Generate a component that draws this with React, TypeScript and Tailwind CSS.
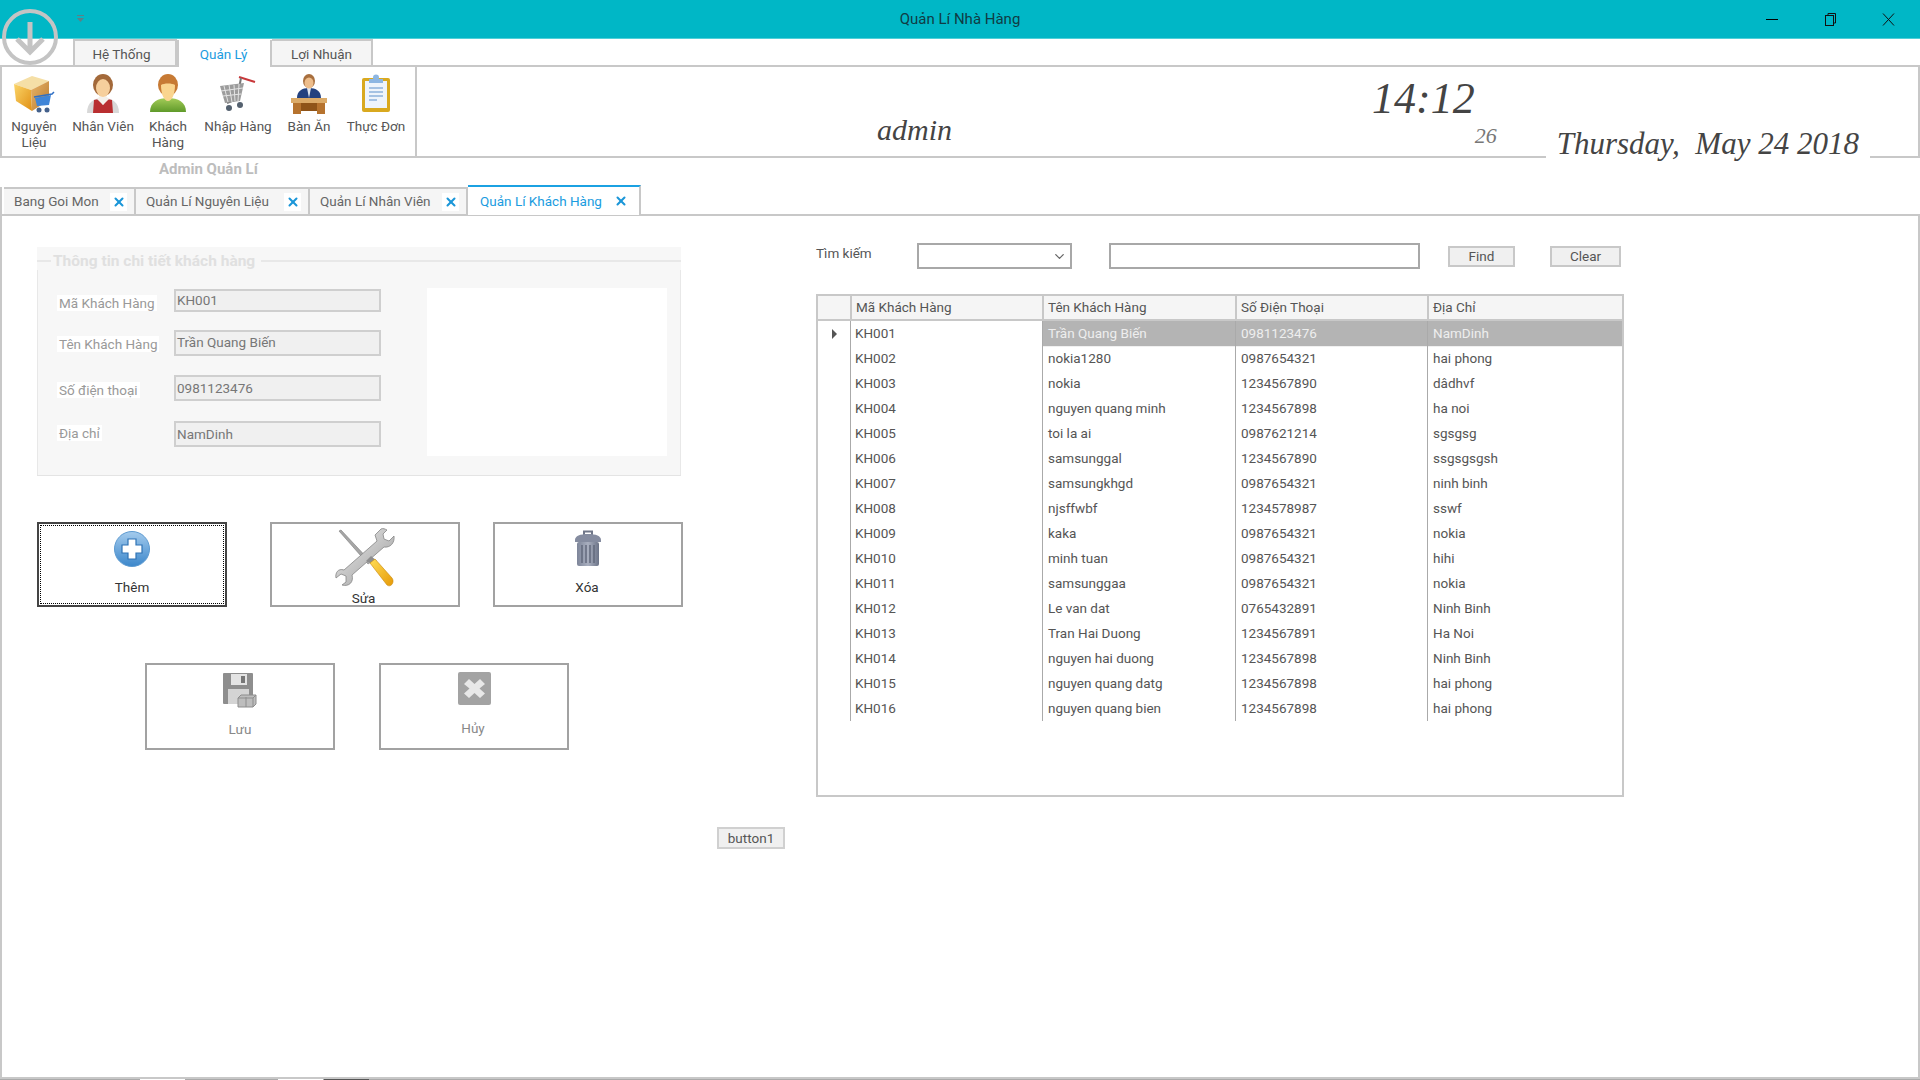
import { X, ChevronDown } from 'lucide-react';
import type { ReactNode } from 'react';

const customers = [
    ['KH001', 'Trần Quang Biến', '0981123476', 'NamDinh'],
    ['KH002', 'nokia1280', '0987654321', 'hai phong'],
    ['KH003', 'nokia', '1234567890', 'dâdhvf'],
    ['KH004', 'nguyen quang minh', '1234567898', 'ha noi'],
    ['KH005', 'toi la ai', '0987621214', 'sgsgsg'],
    ['KH006', 'samsunggal', '1234567890', 'ssgsgsgsh'],
    ['KH007', 'samsungkhgd', '0987654321', 'ninh binh'],
    ['KH008', 'njsffwbf', '1234578987', 'sswf'],
    ['KH009', 'kaka', '0987654321', 'nokia'],
    ['KH010', 'minh tuan', '0987654321', 'hihi'],
    ['KH011', 'samsunggaa', '0987654321', 'nokia'],
    ['KH012', 'Le van dat', '0765432891', 'Ninh Binh'],
    ['KH013', 'Tran Hai Duong', '1234567891', 'Ha Noi'],
    ['KH014', 'nguyen hai duong', '1234567898', 'Ninh Binh'],
    ['KH015', 'nguyen quang datg', '1234567898', 'hai phong'],
    ['KH016', 'nguyen quang bien', '1234567898', 'hai phong'],
];

const BoxIcon = () => (
    <svg width="42" height="40" viewBox="0 0 42 40">
        <defs>
            <linearGradient id="boxL" x1="0" y1="0" x2="1" y2="1"><stop offset="0" stopColor="#fbd568" /><stop offset="1" stopColor="#e08f14" /></linearGradient>
            <linearGradient id="boxR" x1="0" y1="0" x2="1" y2="1"><stop offset="0" stopColor="#e9b568" /><stop offset="1" stopColor="#b97a30" /></linearGradient>
        </defs>
        <polygon points="1,10 19,2 36,7 18,16" fill="#f5dfa6" />
        <polygon points="1,10 18,16 19,37 3,27" fill="url(#boxL)" />
        <polygon points="18,16 36,7 36,26 19,37" fill="url(#boxR)" />
        <path d="M21 23 L39 20 L41 18" fill="none" stroke="#2f6fc4" strokeWidth="1.5" />
        <polygon points="22,24 38,21 36,31 24,32" fill="#3f85d8" />
        <circle cx="26" cy="36" r="2.5" fill="#44618c" />
        <circle cx="34" cy="36" r="2.5" fill="#44618c" />
    </svg>
);

const VestIcon = () => (
    <svg width="34" height="40" viewBox="0 0 34 40">
        <path d="M1 39 C1 28 8 24 17 24 C26 24 33 28 33 39 Z" fill="#d8d8d8" />
        <path d="M7 39 L8 26 L13 25 L17 31 L21 25 L26 26 L27 39 Z" fill="#b92e30" />
        <path d="M11 25 L17 31 L23 25 L20 22 H14 Z" fill="#f4f0ea" />
        <ellipse cx="17" cy="11" rx="10" ry="11" fill="#a3693a" />
        <ellipse cx="17" cy="14" rx="7" ry="9" fill="#f6cf9c" />
    </svg>
);

const GreenIcon = () => (
    <svg width="36" height="39" viewBox="0 0 36 39">
        <defs>
            <linearGradient id="grn" x1="0" y1="0" x2="0" y2="1"><stop offset="0" stopColor="#a4cc58" /><stop offset="1" stopColor="#5f9a2a" /></linearGradient>
        </defs>
        <path d="M0 38 C0 28 8 24 18 24 C28 24 36 28 36 38 Z" fill="url(#grn)" />
        <ellipse cx="18" cy="11" rx="10" ry="11" fill="#c77a34" />
        <path d="M11 11 C14 9 22 9 25 11 C25 20 22 27 18 27 C14 27 11 20 11 11 Z" fill="#fad58f" />
    </svg>
);

const CartIcon = () => (
    <svg width="38" height="38" viewBox="0 0 38 38">
        <path d="M20 3 L36 8" stroke="#c8383a" strokeWidth="2" />
        <path d="M22 4 L18 25 L8 29" fill="none" stroke="#777" strokeWidth="2" />
        <polygon points="1,12 25,9 21,27 6,29" fill="#9c9c9c" />
        <path d="M5 12 L9 28 M10 11 L13 28 M15 11 L16 27 M20 10 L19 27 M2 17 L24 14 M4 22 L22 20" stroke="#e4e4e4" strokeWidth="1" />
        <circle cx="10" cy="34" r="3" fill="#54616f" />
        <circle cx="21" cy="31" r="3" fill="#54616f" />
    </svg>
);

const DeskIcon = () => (
    <svg width="36" height="40" viewBox="0 0 36 40">
        <path d="M6 24 C6 17 11 14 18 14 C25 14 30 17 30 24 Z" fill="#23417f" />
        <path d="M16 14 L18 24 L20 14 Z" fill="#dfe6f0" />
        <ellipse cx="18" cy="7" rx="6" ry="7" fill="#a86f3e" />
        <ellipse cx="18" cy="9" rx="4.5" ry="5.5" fill="#edbd8b" />
        <rect x="0" y="24" width="36" height="5" fill="#dcab68" />
        <rect x="2" y="29" width="8" height="11" fill="#b6732e" />
        <rect x="26" y="29" width="8" height="11" fill="#b6732e" />
        <rect x="10" y="29" width="16" height="8" fill="#8f5418" />
    </svg>
);

const ClipboardIcon = () => (
    <svg width="30" height="39" viewBox="0 0 30 39">
        <rect x="1" y="4" width="28" height="34" rx="2" fill="#d9a91f" />
        <rect x="4" y="7" width="22" height="27" fill="#eef4fb" />
        <path d="M8 5 H22 V9 H8 Z" fill="#8db6e2" />
        <circle cx="15" cy="3.5" r="3" fill="#8db6e2" />
        <path d="M8 14 H22 M8 18 H22 M8 22 H22 M8 26 H16" stroke="#8db1dc" strokeWidth="1.6" />
    </svg>
);

const PlusIcon = () => (
    <svg width="36" height="36" viewBox="0 0 36 36">
        <defs>
            <linearGradient id="plusBg" x1="0" y1="0" x2="0" y2="1"><stop offset="0" stopColor="#a4cbed" /><stop offset="1" stopColor="#3c87cb" /></linearGradient>
        </defs>
        <circle cx="18" cy="18" r="17.5" fill="url(#plusBg)" stroke="#5d9ad0" />
        <path d="M14 8 H22 V14 H28 V22 H22 V28 H14 V22 H8 V14 H14 Z" fill="#fff" stroke="#2f73b5" strokeWidth="1.2" />
    </svg>
);

const ToolsIcon = () => (
    <svg width="60" height="60" viewBox="0 0 60 60">
        <defs>
            <linearGradient id="steel" x1="0" y1="0" x2="1" y2="1"><stop offset="0" stopColor="#ededed" /><stop offset="1" stopColor="#9b9b9b" /></linearGradient>
            <linearGradient id="handle" x1="0" y1="0" x2="1" y2="1"><stop offset="0" stopColor="#ffdd55" /><stop offset="1" stopColor="#e69a08" /></linearGradient>
        </defs>
        <path d="M4 3 L6 2 L36 34 L33 36 Z" fill="#a6a6a6" stroke="#7c7c7c" strokeWidth="0.6" />
        <path d="M46 1 L40 7 L42 13 L9 42 C3 40 0 45 1 50 L6 46 L11 48 L11 54 L7 57 C14 59 19 54 17 47 L49 19 C55 20 60 15 59 8 L54 13 L49 11 L48 6 L52 2 C50 1 48 0 46 1 Z" fill="url(#steel)" stroke="#858585" strokeWidth="0.8" />
        <path d="M31 33 L36 28 L42 33 L40 37 Z" fill="#8d8d8d" />
        <path d="M35 35 L40 31 L57 50 C60 54 56 60 52 57 Z" fill="url(#handle)" stroke="#c88608" strokeWidth="0.6" />
    </svg>
);

const TrashIcon = () => (
    <svg width="28" height="37" viewBox="0 0 28 37">
        <defs>
            <linearGradient id="bin" x1="0" y1="0" x2="1" y2="0"><stop offset="0" stopColor="#7d8599" /><stop offset="0.5" stopColor="#a9afbf" /><stop offset="1" stopColor="#6c7488" /></linearGradient>
        </defs>
        <path d="M10 5 V1.5 H18 V5" fill="none" stroke="#707789" strokeWidth="2" />
        <path d="M1 10 C1 6 6 4 14 4 C22 4 27 6 27 10 V12 H1 Z" fill="#858ca0" />
        <rect x="3" y="12" width="22" height="24" rx="2" fill="url(#bin)" />
        <path d="M8 15 V33 M12 15 V33 M16 15 V33 M20 15 V33" stroke="#5f6679" strokeWidth="1.4" />
    </svg>
);

const FloppyIcon = () => (
    <svg width="34" height="35" viewBox="0 0 34 35">
        <rect x="0" y="0" width="30" height="31" rx="1" fill="#8e8e8e" />
        <rect x="8" y="1" width="16" height="11" fill="#e4e4e4" />
        <rect x="18" y="3" width="4" height="7" fill="#777" />
        <rect x="5" y="16" width="21" height="15" fill="#d4d4d4" />
        <path d="M15 25 L18 22 H33 V31 L30 34 H15 Z" fill="#bdbdbd" stroke="#8d8d8d" />
        <path d="M23 24 V34 M15 25 H30 V34 M30 25 L33 22" fill="none" stroke="#8d8d8d" />
    </svg>
);

const CancelIcon = () => (
    <svg width="33" height="33" viewBox="0 0 33 33">
        <rect x="0" y="0" width="33" height="33" rx="2" fill="#a3a3a3" />
        <path d="M11 7 L16.5 12 L22 7 L27 12 L21.5 16.5 L27 21.5 L22 26 L16.5 21 L11 26 L6 21.5 L11.5 16.5 L6 12 Z" fill="#e8e8e8" />
    </svg>
);

const RibbonButton = ({ icon, label, width }: { icon: ReactNode; label: ReactNode; width: string }) => (
    <div className={`${width} flex flex-col items-center pt-[7px] text-center text-[13.5px] leading-[16px] text-[#555]`}>
        <div className="h-[41px] flex items-start justify-center">{icon}</div>
        <div className="mt-[3px]">{label}</div>
    </div>
);

const DocTab = ({ label, width, active }: { label: string; width: string; active?: boolean }) => (
    <div className={active
        ? `${width} h-[30px] -mt-[2px] -mb-[1px] relative z-10 flex items-center justify-between pl-[12px] pr-[10px] bg-white border-t-2 border-t-[#1ba1e2] border-r-2 border-r-[#c8c8c8] text-[#1b9ce0]`
        : `${width} h-[27px] flex items-center justify-between pl-[10px] pr-[7px] bg-[#f5f5f5] border-t-2 border-r-2 border-[#c8c8c8] text-[#666]`}>
        <span>{label}</span>
        <span className="w-[17px] h-[18px] bg-white flex items-center justify-center">
            <X size={14} strokeWidth={3.5} className="text-[#1b96d8]" />
        </span>
    </div>
);

const FormRow = ({ label, value, rowClass, labelClass, inputClass }: { label: string; value: string; rowClass: string; labelClass: string; inputClass: string }) => (
    <div className={`flex ${rowClass}`}>
        <div className="w-[117px] shrink-0">
            <span className={`inline-block h-[16px] px-[2px] leading-[16px] bg-white text-[#999] ${labelClass}`}>{label}</span>
        </div>
        <div className={`w-[207px] bg-[#f0f0f0] border-2 border-[#cfcfcf] pl-[1px] text-[#777] ${inputClass}`}>{value}</div>
    </div>
);

const ActionButton = ({ icon, label, rowClass, labelClass, focused }: { icon: ReactNode; label: string; rowClass: string; labelClass: string; focused?: boolean }) => (
    <div className={focused
        ? `relative w-[190px] flex flex-col items-center border-2 border-[#444] ${rowClass}`
        : `w-[190px] flex flex-col items-center border-2 border-[#a2a2a2] ${rowClass}`}>
        {focused && <div className="absolute inset-[1px] border border-dotted border-black" />}
        <div className="shrink-0">{icon}</div>
        <span className={labelClass}>{label}</span>
    </div>
);

export default function App() {
    return (
        <div className="relative w-[1920px] h-[1080px] overflow-hidden bg-white flex flex-col font-['Roboto',sans-serif] text-[13.5px]">
            {/* title bar */}
            <div className="h-[39px] shrink-0 bg-[#00b7c6] border-b border-b-[#4fd0d8] flex items-center justify-center relative text-[15px] text-[#103c44]">
                <span className="mt-[1px]">Quản Lí Nhà Hàng</span>
                <div className="absolute right-0 top-0 h-[38px] flex items-center gap-[46px] pr-[25px]">
                    <div className="w-[12px] h-px bg-black" />
                    <svg width="12" height="13" viewBox="0 0 12 13" fill="none" stroke="#111"><rect x="1.5" y="2.5" width="8" height="10" /><path d="M4 2.5 V0.5 H11.5 V10 H9.5" /></svg>
                    <svg width="13" height="13" viewBox="0 0 13 13" stroke="#111"><path d="M1 0.5 L12 12.5 M12 0.5 L1 12.5" /></svg>
                </div>
            </div>
            <svg className="absolute left-[2px] top-[8px] z-20" width="56" height="58" viewBox="0 0 56 58" fill="none" stroke="#c4c4c4">
                <circle cx="28" cy="29" r="26" strokeWidth="4" />
                <path d="M28 14 V43 M15 31 L28 44 L41 31" strokeWidth="5" />
            </svg>
            <svg className="absolute left-[76px] top-[14px]" width="9" height="9" viewBox="0 0 9 9" fill="#5d7f86"><rect x="1" y="1" width="7" height="1" /><polygon points="1,4 8,4 4.5,8" /></svg>

            {/* ribbon tabs */}
            <div className="h-[26px] shrink-0 flex items-end pl-[73px] text-[#555]">
                <div className="w-[104px] h-[26px] pt-[2px] pr-[7px] flex items-center justify-center bg-[#f5f5f5] border-t-2 border-x-2 border-[#c8c8c8]">Hệ Thống</div>
                <div className="w-[95px] h-[27px] pt-[2px] pr-[2px] -mb-[2px] relative z-10 flex items-center justify-center bg-white border-x-2 border-[#c8c8c8] text-[#1b9ce0]">Quản Lý</div>
                <div className="w-[101px] h-[26px] pt-[2px] flex items-center justify-center bg-[#f5f5f5] border-t-2 border-r-2 border-[#c8c8c8]">Lợi Nhuận</div>
            </div>

            {/* ribbon panel */}
            <div className="h-[93px] shrink-0 flex border-y-2 border-[#c8c8c8]">
                <div className="w-[417px] shrink-0 flex border-x-2 border-[#c8c8c8]">
                    <RibbonButton width="w-[64px]" icon={<BoxIcon />} label={<>Nguyên<br />Liệu</>} />
                    <RibbonButton width="w-[74px]" icon={<VestIcon />} label="Nhân Viên" />
                    <RibbonButton width="w-[56px]" icon={<GreenIcon />} label={<>Khách<br />Hàng</>} />
                    <RibbonButton width="w-[84px]" icon={<CartIcon />} label="Nhập Hàng" />
                    <RibbonButton width="w-[58px]" icon={<DeskIcon />} label="Bàn Ăn" />
                    <RibbonButton width="w-[76px]" icon={<ClipboardIcon />} label="Thực Đơn" />
                </div>
                <div className="flex-1 flex items-start border-r-2 border-[#c8c8c8] font-['Liberation_Serif',serif] italic text-[#444]">
                    <span className="ml-[460px] mt-[46px] text-[30px] leading-[34px]">admin</span>
                    <span className="ml-[420px] mt-[12px] text-[44px] leading-[40px]">14:12</span>
                    <span className="mt-[57px] text-[22px] leading-[24px] text-[#777]">26</span>
                    <span className="ml-[49px] mt-[57px] h-[40px] px-[11px] relative z-10 bg-white text-[31px] leading-[40px] whitespace-pre">Thursday,  May 24 2018</span>
                </div>
            </div>

            <div className="h-[29px] shrink-0 flex items-center pl-[159px] pb-[6px] font-bold text-[15px] text-[#bdbdbd]">Admin Quản Lí</div>

            {/* document tabs */}
            <div className="h-[27px] shrink-0 flex pl-[2px] border-l-2 border-[#c8c8c8]">
                <DocTab width="w-[132px]" label="Bang Goi Mon" />
                <DocTab width="w-[174px]" label="Quản Lí Nguyên Liệu" />
                <DocTab width="w-[158px]" label="Quản Lí Nhân Viên" />
                <DocTab width="w-[173px]" label="Quản Lí Khách Hàng" active />
            </div>

            {/* form */}
            <div className="flex-1 flex border-2 border-[#c8c8c8]">
                <div className="w-[814px] shrink-0 flex flex-col pl-[35px] pt-[31px]">
                    <div className="w-[644px] h-[229px] bg-[#f7f7f7] flex flex-col border-b border-b-[#e4e4e4]">
                        <div className="h-[18px] mt-[5px] flex items-center text-[#e0e0e0] font-bold text-[15.5px]">
                            <div className="w-[14px] h-[2px] bg-[#e8e8e8]" />
                            <span className="px-[2px] pt-[1px]">Thông tin chi tiết khách hàng</span>
                            <div className="flex-1 h-[2px] bg-[#e8e8e8] ml-[4px]" />
                        </div>
                        <div className="flex-1 flex border-x border-[#e8e8e8] pl-[19px]">
                            <div className="w-[324px] flex flex-col">
                                <FormRow rowClass="mt-[19px] items-start" labelClass="mt-[6px]" inputClass="h-[23px] leading-[18px]" label="Mã Khách Hàng" value="KH001" />
                                <FormRow rowClass="mt-[17px] items-start" labelClass="mt-[6px]" inputClass="h-[26px] leading-[20px]" label="Tên Khách Hàng" value="Trần Quang Biến" />
                                <FormRow rowClass="mt-[19px] items-start" labelClass="mt-[7px]" inputClass="h-[26px] leading-[22px]" label="Số điện thoại" value="0981123476" />
                                <FormRow rowClass="mt-[20px] items-start" labelClass="mt-[4px]" inputClass="h-[26px] leading-[22px]" label="Địa chỉ" value="NamDinh" />
                            </div>
                            <div className="ml-[46px] mt-[18px] w-[240px] h-[168px] bg-white" />
                        </div>
                    </div>

                    <div className="flex mt-[46px] text-[#333]">
                        <ActionButton focused rowClass="h-[85px] pt-[7px]" labelClass="mt-[10px]" icon={<PlusIcon />} label="Thêm" />
                        <ActionButton rowClass="h-[85px] ml-[43px] pt-[4px]" labelClass="-ml-[3px]" icon={<ToolsIcon />} label="Sửa" />
                        <ActionButton rowClass="h-[85px] ml-[33px] pt-[6px]" labelClass="mt-[10px] -ml-[2px]" icon={<TrashIcon />} label="Xóa" />
                    </div>
                    <div className="flex mt-[56px] ml-[108px] text-[#888]">
                        <ActionButton rowClass="h-[87px] pt-[8px]" labelClass="mt-[11px]" icon={<FloppyIcon />} label="Lưu" />
                        <ActionButton rowClass="h-[87px] ml-[44px] pt-[7px]" labelClass="mt-[13px] -ml-[2px]" icon={<CancelIcon />} label="Hủy" />
                    </div>
                    <div className="w-[68px] h-[22px] mt-[77px] ml-[680px] flex items-center justify-center bg-[#f0f0f0] border-2 border-[#d0d0d0] text-[#555]">button1</div>
                </div>

                {/* search and grid */}
                <div className="flex flex-col pt-[27px] text-[#555]">
                    <div className="flex items-start h-[26px]">
                        <span className="w-[101px] mt-[1px] leading-[18px]">Tìm kiếm</span>
                        <div className="w-[155px] h-[26px] border-2 border-[#a8a8a8] flex items-center justify-end pr-[3px]">
                            <ChevronDown size={15} className="text-[#666]" />
                        </div>
                        <div className="w-[311px] h-[26px] ml-[37px] border-2 border-[#a8a8a8]" />
                        <div className="w-[67px] h-[21px] ml-[28px] mt-[3px] flex items-center justify-center bg-[#f0f0f0] border-2 border-[#c8c8c8]">Find</div>
                        <div className="w-[71px] h-[21px] ml-[35px] mt-[3px] flex items-center justify-center bg-[#f0f0f0] border-2 border-[#c8c8c8]">Clear</div>
                    </div>

                    <div className="w-[808px] h-[503px] mt-[25px] border-2 border-[#c8c8c8]">
                        <div className="grid grid-cols-[32px_192px_193px_192px_1fr] h-[25px] bg-[#f5f5f5] border-b-2 border-[#c8c8c8] leading-[22px]">
                            <div />
                            <div className="border-l-2 border-[#c8c8c8] pl-[4px]">Mã Khách Hàng</div>
                            <div className="border-l-2 border-[#c8c8c8] pl-[4px]">Tên Khách Hàng</div>
                            <div className="border-l-2 border-[#c8c8c8] pl-[4px]">Số Điện Thoại</div>
                            <div className="border-l-2 border-[#c8c8c8] pl-[4px]">Địa Chỉ</div>
                        </div>
                        {customers.map((row, i) => (
                            <div key={row[0]} className="grid grid-cols-[32px_192px_193px_192px_1fr] h-[25px] leading-[25px]">
                                <div className="flex items-center justify-center">
                                    {i === 0 && <svg width="6" height="10" viewBox="0 0 6 10" fill="#555"><polygon points="1,0 6,5 1,10" /></svg>}
                                </div>
                                {row.map((cell, c) => (
                                    <div key={c} className={i === 0 && c > 0
                                        ? 'bg-[#b4b4b4] text-[#eee] border-b border-[#f0f0f0] border-l border-l-[#aaa] pl-[5px]'
                                        : c > 0 ? 'border-l border-[#aaa] pl-[5px]' : 'border-l border-[#aaa] pl-[4px]'}>{cell}</div>
                                ))}
                            </div>
                        ))}
                    </div>
                </div>
            </div>
            <div className="h-px shrink-0 flex bg-[#aaa]">
                <div className="ml-[140px] w-[45px] bg-white" />
                <div className="ml-[93px] w-[45px] bg-white" />
                <div className="ml-[1px] w-[45px] bg-[#555]" />
            </div>
        </div>
    );
}
